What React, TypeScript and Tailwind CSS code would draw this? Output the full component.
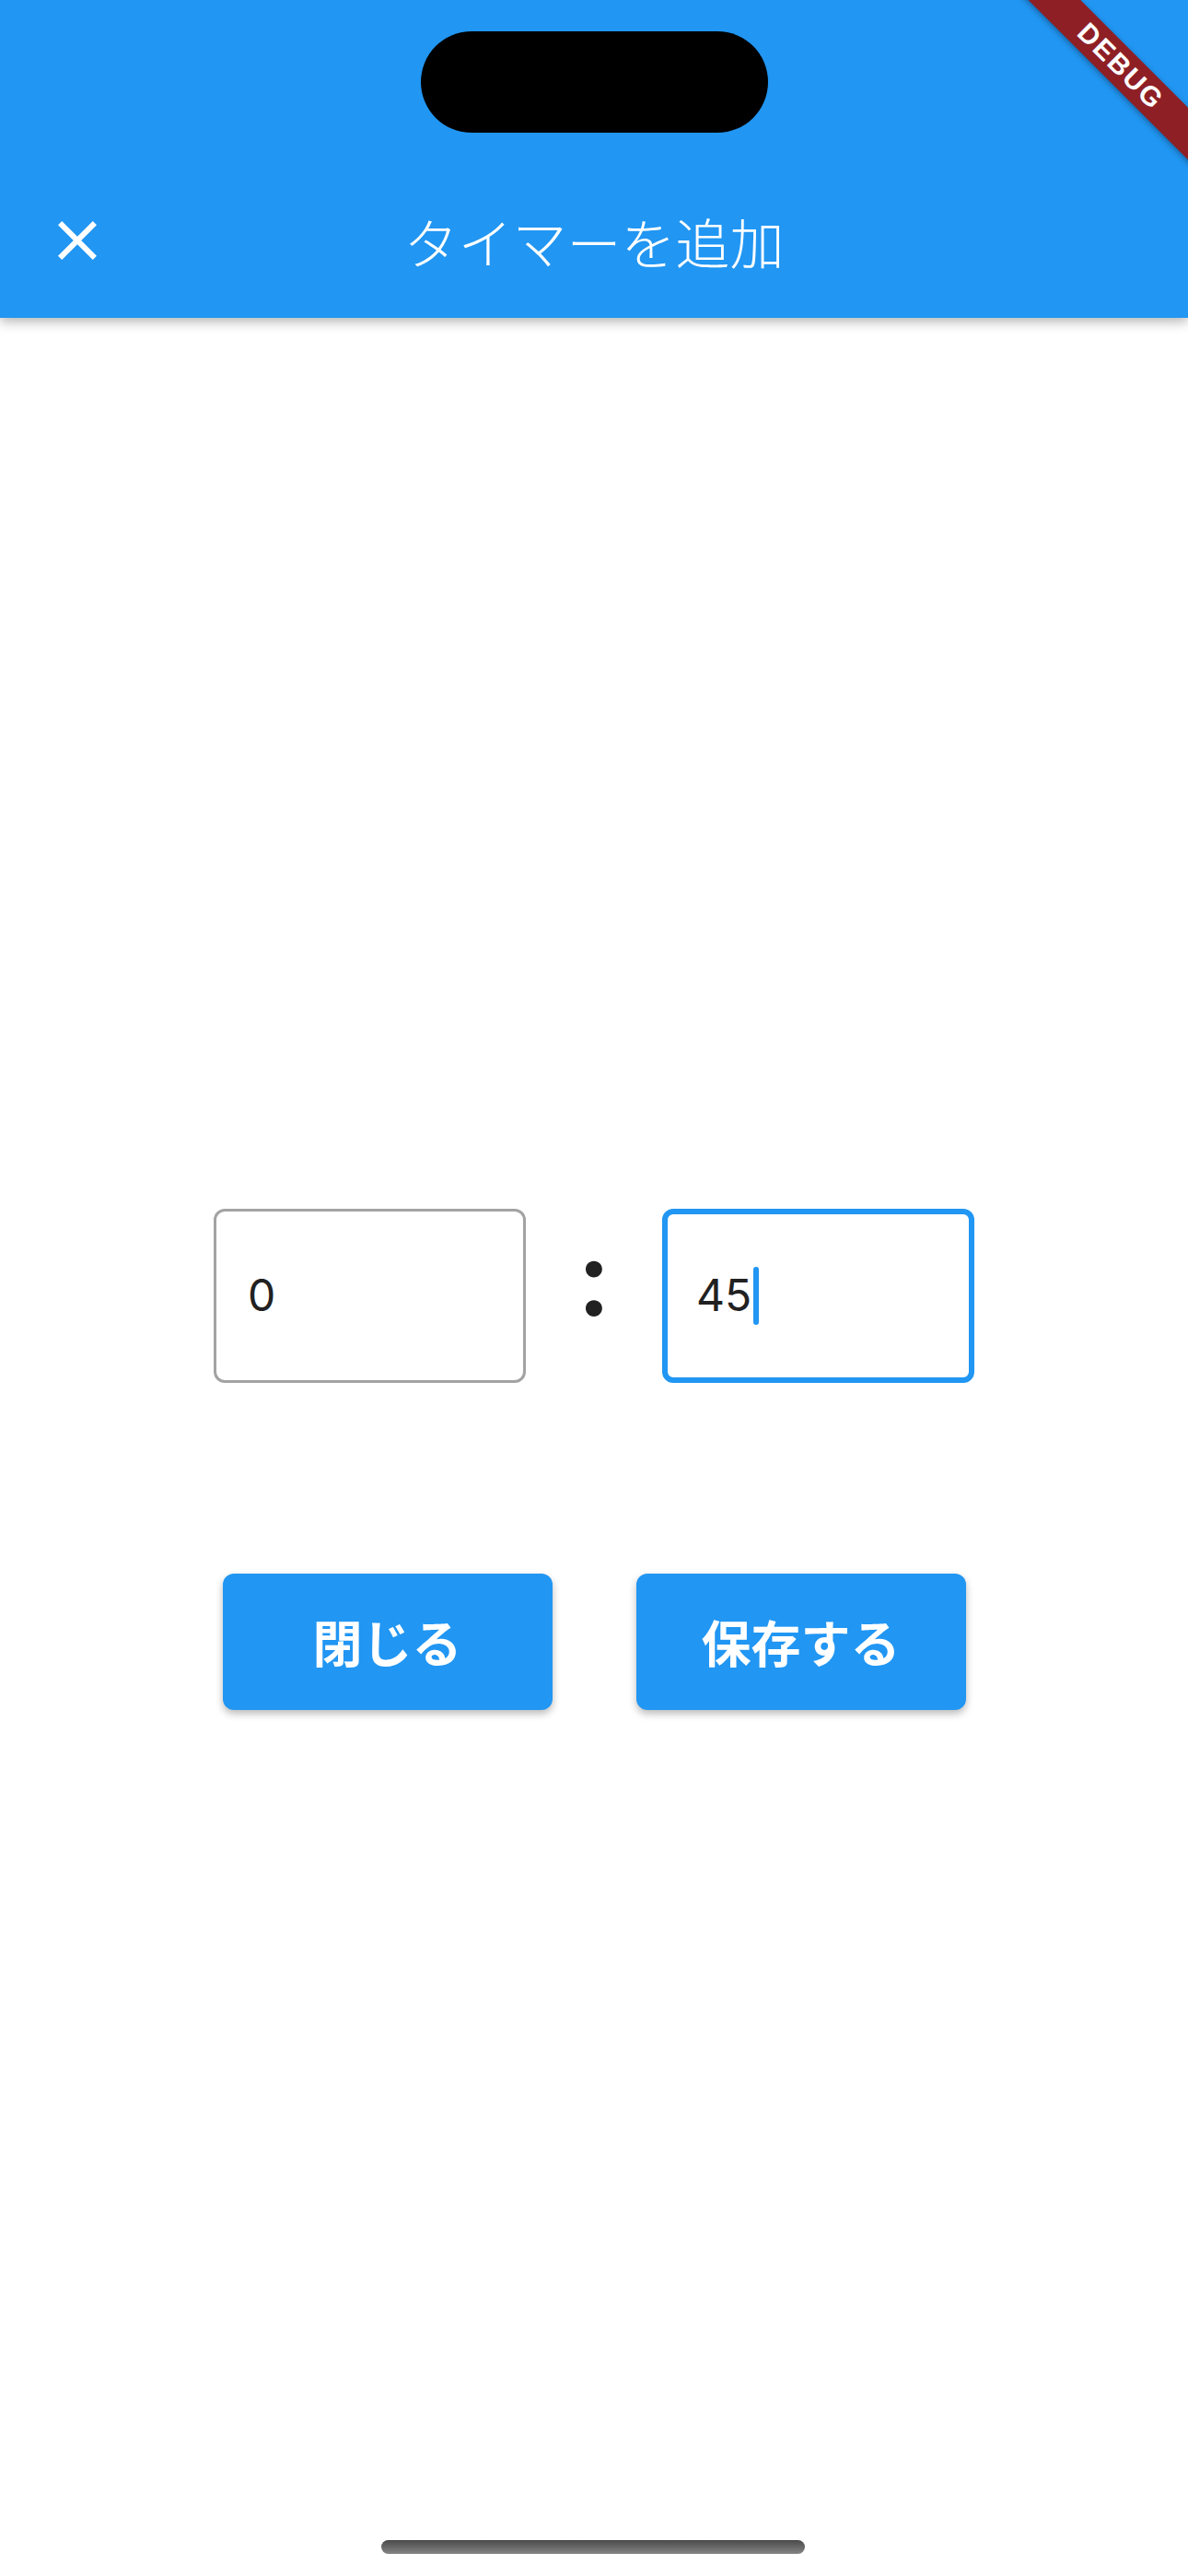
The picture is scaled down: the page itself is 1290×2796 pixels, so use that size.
import React from "react";

const JP = { fontFamily: '"Noto Sans CJK JP", "Noto Sans", sans-serif' };

function CloseIcon() {
  return (
    <svg width="72" height="72" viewBox="0 0 24 24" fill="white" aria-hidden>
      <path d="M19 6.41L17.59 5 12 10.59 6.41 5 5 6.41 10.59 12 5 17.59 6.41 19 12 13.41 17.59 19 19 17.59 13.41 12z" />
    </svg>
  );
}

function TimeField({ value, focused }: { value: string; focused?: boolean }) {
  return (
    <div
      className={
        focused
          ? "w-[339px] h-[189px] rounded-[12px] border-[6px] border-[#2196f3] flex items-center pl-[31px]"
          : "w-[339px] h-[189px] rounded-[12px] border-[3px] border-[#a3a3a3] flex items-center pl-[34px]"
      }
    >
      <span className="text-[48px] leading-none text-[#212121] font-['Inter',sans-serif]">{value}</span>
      {focused && <span className="ml-[2px] w-[6px] h-[63px] rounded-full bg-[#2196f3]" />}
    </div>
  );
}

export default function App() {
  return (
    <div className="relative w-[1290px] h-[2796px] overflow-hidden bg-white flex flex-col" style={JP}>
      {/* App bar */}
      <header className="relative z-10 h-[345px] bg-[#2196f3] flex flex-col shadow-[0_4px_12px_rgba(0,0,0,0.3)]">
        <div className="h-[177px] flex justify-center pt-[34px]">
          <div className="w-[377px] h-[110px] rounded-full bg-black" />
        </div>
        <div className="h-[168px] grid grid-cols-[168px_1fr_168px] items-center">
          <div className="flex justify-center">
            <CloseIcon />
          </div>
          <h1 className="text-center text-white text-[59px] font-light leading-none">タイマーを追加</h1>
          <div />
        </div>
      </header>

      {/* Body */}
      <main className="flex-1 flex flex-col items-center justify-center pt-[26px]">
        <div className="flex items-center">
          <TimeField value="0" />
          <div className="w-[148px] flex justify-center">
            <span className="text-[114px] leading-none text-[#212121] font-['Inter',sans-serif] font-semibold -mt-[38px]">:</span>
          </div>
          <TimeField value="45" focused />
        </div>

        <div className="flex gap-[91px] mt-[207px]">
          <button className="w-[358px] h-[148px] rounded-[12px] bg-[#2196f3] text-white text-[54px] font-bold shadow-[0_4px_8px_rgba(0,0,0,0.28)]">
            閉じる
          </button>
          <button className="w-[358px] h-[148px] rounded-[12px] bg-[#2196f3] text-white text-[54px] font-bold shadow-[0_4px_8px_rgba(0,0,0,0.28)]">
            保存する
          </button>
        </div>
      </main>

      {/* Home indicator */}
      <div className="absolute left-[414px] top-[2757px] w-[460px] h-[15px] rounded-full bg-gradient-to-b from-[#4a4a4a] to-[#858585]" />

      {/* Debug banner */}
      <div className="absolute z-20 left-[1067px] top-[52px] w-[300px] h-[40px] rotate-45 bg-[#8e1f25] flex items-center justify-center shadow-[0_2px_6px_rgba(0,0,0,0.35)]">
        <span className="text-white text-[30px] font-bold tracking-[2px] leading-none font-['Liberation_Sans',sans-serif]">DEBUG</span>
      </div>
    </div>
  );
}
